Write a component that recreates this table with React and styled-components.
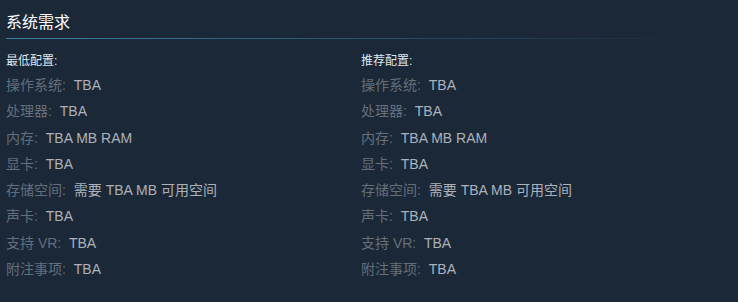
import React from "react"
import styled, { createGlobalStyle } from "styled-components"

const GlobalStyle = createGlobalStyle`
  html, body {
    margin: 0;
    padding: 0;
    background: #1b2838;
  }
  body {
    font-family: "Liberation Sans", Arial, "Noto Sans CJK SC", sans-serif;
  }
`

const SPECS = [
  ["操作系统:", "TBA"],
  ["处理器:", "TBA"],
  ["内存:", "TBA MB RAM"],
  ["显卡:", "TBA"],
  ["存储空间:", "需要 TBA MB 可用空间"],
  ["声卡:", "TBA"],
  ["支持 VR:", "TBA"],
  ["附注事项:", "TBA"],
]

const Section = styled.section`
  width: 738px;
  height: 302px;
  box-sizing: border-box;
  padding: 0 6px;
  background: #1b2838;
`

const Title = styled.h2`
  margin: 13px 0 0;
  padding-bottom: 6px;
  font-size: 16px;
  line-height: 20px;
  font-weight: normal;
  color: #ffffff;
  background-image: linear-gradient(
    to right,
    #3a80a6 0%,
    rgba(42, 90, 118, 0.9) 48%,
    rgba(42, 90, 118, 0) 94%
  );
  background-repeat: no-repeat;
  background-position: left bottom;
  background-size: 100% 1px;
`

const Columns = styled.div`
  display: grid;
  grid-template-columns: 355px 355px;
  margin-top: 14px;
`

const Column = styled.div`
  display: flex;
  flex-direction: column;
`

const Heading = styled.div`
  font-size: 12px;
  line-height: 16px;
  color: #dfe6ec;
  font-weight: normal;
  margin-bottom: 3px;
`

const SpecList = styled.ul`
  list-style: none;
  margin: 0;
  padding: 0;
`

const SpecRow = styled.li`
  font-size: 14px;
  line-height: 26.3px;
  color: #acb2b8;
  white-space: nowrap;
`

const Label = styled.span`
  color: #646f7b;
  margin-right: 4px;
`

function SpecColumn({ heading }) {
  return (
    <Column>
      <Heading>{heading}</Heading>
      <SpecList>
        {SPECS.map(([label, value]) => (
          <SpecRow key={label}>
            <Label>{label}</Label> {value}
          </SpecRow>
        ))}
      </SpecList>
    </Column>
  )
}

export default function App() {
  return (
    <>
      <GlobalStyle />
      <Section>
        <Title>系统需求</Title>
        <Columns>
          <SpecColumn heading="最低配置:" />
          <SpecColumn heading="推荐配置:" />
        </Columns>
      </Section>
    </>
  )
}
